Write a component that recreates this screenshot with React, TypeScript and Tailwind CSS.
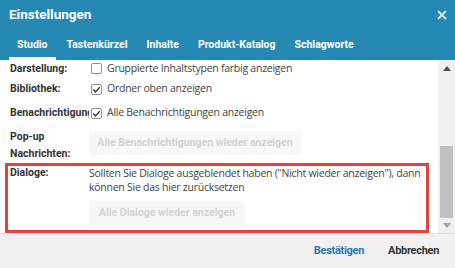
import React from "react";

const Check = ({ checked }: { checked: boolean }) => (
  <svg width="11" height="11" viewBox="0 0 11 11" className="shrink-0">
    <rect x="0.5" y="0.5" width="10" height="10" rx="1.5" fill="#fff" stroke="#919191" />
    {checked && <path d="M2.3 5.6 L4.5 7.9 L8.8 3.1" fill="none" stroke="#333" strokeWidth="1.4" />}
  </svg>
);

export default function App() {
  const roboto = { fontFamily: "Roboto, 'Liberation Sans', sans-serif" };
  const open = { fontFamily: "'Open Sans', 'Liberation Sans', sans-serif" };
  const label = "w-[89px] pl-[10px] pr-[1px] font-bold text-[#333] overflow-hidden whitespace-nowrap shrink-0 text-[10.5px]";
  return (
    <div className="w-[455px] h-[268px] flex flex-col bg-white overflow-hidden" style={roboto}>
      {/* header */}
      <div className="h-[60px] bg-[#2689b4] flex flex-col shrink-0">
        <div className="h-[29px] flex items-center justify-between pl-[9px] pr-[8px]">
          <span className="text-white font-bold text-[13.5px]">Einstellungen</span>
          <svg width="10" height="10" viewBox="0 0 10 10">
            <path d="M1 1 L9 9 M9 1 L1 9" stroke="#d5e8f1" strokeWidth="1.8" />
          </svg>
        </div>
        <div className="flex-1 flex items-end pl-[9px] gap-[3px] text-white font-bold text-[10.5px]">
          <div className="h-[31px] px-[8px] flex items-center border-b-[3px] border-white pt-[3px]">Studio</div>
          <div className="h-[31px] px-[8px] flex items-center">Tastenkürzel</div>
          <div className="h-[31px] px-[8px] flex items-center">Inhalte</div>
          <div className="h-[31px] px-[8px] flex items-center">Produkt-Katalog</div>
          <div className="h-[31px] px-[8px] flex items-center">Schlagworte</div>
        </div>
      </div>

      {/* content */}
      <div className="h-[173px] flex shrink-0">
        <div className="flex-1 flex flex-col text-[10.5px] text-[#444]">
          <div className="h-[17px] flex items-center">
            <div className={label}>Darstellung:</div>
            <span className="ml-[2px]"><Check checked={false} /></span>
            <span className="ml-[5px] tracking-[-0.25px]" style={open}>Gruppierte Inhaltstypen farbig anzeigen</span>
          </div>
          <div className="h-[16px] mt-[4px] flex items-center">
            <div className={label}>Bibliothek:</div>
            <span className="ml-[2px]"><Check checked={true} /></span>
            <span className="ml-[5px] tracking-[-0.25px]" style={open}>Ordner oben anzeigen</span>
          </div>
          <div className="h-[16px] mt-[8px] flex items-center">
            <div className={label}>Benachrichtigungen:</div>
            <span className="ml-[2px]"><Check checked={true} /></span>
            <span className="ml-[5px] tracking-[-0.25px]" style={open}>Alle Benachrichtigungen anzeigen</span>
          </div>
          <div className="mt-[7px] flex items-start h-[35px]">
            <div className="w-[89px] pl-[10px] font-bold text-[#333] leading-[17px] shrink-0">Pop-up<br />Nachrichten:</div>
            <div className="mt-[3px] h-[24px] w-[212px] bg-[#f7f7f7] rounded-[2px] flex items-center justify-center font-bold text-[#d2d2d2]">
              Alle Benachrichtigungen wieder anzeigen
            </div>
          </div>
          <div className="ml-[5px] w-[424px] h-[70px] border-[3px] border-[#e2433f] flex items-start">
            <div className="w-[81px] pl-[2px] font-bold text-[#333] leading-[14px] shrink-0">Dialoge:</div>
            <div className="flex flex-col">
              <div className="leading-[14px] text-[#444] tracking-[-0.25px] whitespace-nowrap" style={open}>
                Sollten Sie Dialoge ausgeblendet haben ("Nicht wieder anzeigen"), dann<br />können Sie das hier zurücksetzen
              </div>
              <div className="mt-[7px] h-[24px] w-[156px] bg-[#f7f7f7] rounded-[2px] flex items-center justify-center font-bold text-[#d2d2d2]">
                Alle Dialoge wieder anzeigen
              </div>
            </div>
          </div>
        </div>
        {/* scrollbar */}
        <div className="w-[17px] bg-[#f0f0f0] flex flex-col items-center shrink-0">
          <svg width="8" height="5" viewBox="0 0 8 5" className="mt-[6px]">
            <path d="M0 5 L4 0 L8 5 Z" fill="#505050" />
          </svg>
          <div className="mt-[75px] w-[13px] h-[72px] bg-[#c1c1c1]" />
          <svg width="8" height="5" viewBox="0 0 8 5" className="mt-[5px]">
            <path d="M0 0 L4 5 L8 0 Z" fill="#a3a3a3" />
          </svg>
        </div>
      </div>

      {/* footer */}
      <div className="flex-1 bg-[#f0f0f0] border-t border-[#dedede] flex items-center justify-end pr-[16px] gap-[24px] text-[11px] tracking-[-0.3px] font-bold">
        <span className="text-[#2a77ad]">Bestätigen</span>
        <span className="text-[#333]">Abbrechen</span>
      </div>
    </div>
  );
}
